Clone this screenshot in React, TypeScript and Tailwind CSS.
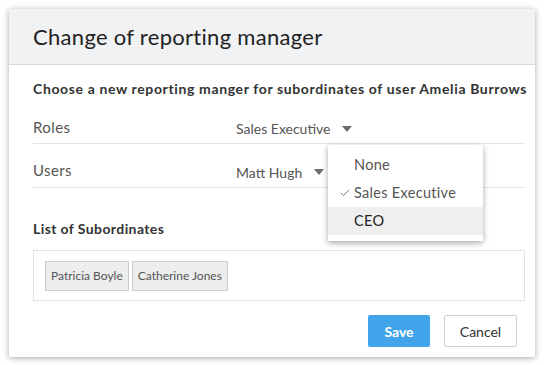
import { Check } from "lucide-react";

const Caret = () => (
  <svg width="10" height="6" viewBox="0 0 10 6" className="shrink-0">
    <path d="M0 0h10L5 6z" fill="#6b6b6b" />
  </svg>
);

const rolesOptions = ["None", "Sales Executive", "CEO"];

export default function App() {
  return (
    <div className="w-[544px] h-[365px] bg-white p-[9px] font-['Lato','Liberation_Sans',sans-serif]">
      <div className="relative w-[526px] h-[348px] bg-white shadow-[0_1px_6px_rgba(0,0,0,0.35)] flex flex-col">
        {/* header */}
        <div className="h-[56px] bg-[#f1f2f4] border-b border-[#d8d8d8] pl-6 flex items-center">
          <h1 className="text-[22px] text-[#222] font-normal tracking-[0.3px]">Change of reporting manager</h1>
        </div>

        {/* body */}
        <div className="pl-6 pr-[10px] pt-[15px] flex flex-col">
          <p className="text-[14px] font-bold text-[#333] leading-[18px] tracking-[0.63px] whitespace-nowrap">
            Choose a new reporting manger for subordinates of user Amelia Burrows
          </p>

          <div className="mt-[8px] pt-[8px] h-[38px] border-b border-[#e4e4e4] flex items-center">
            <span className="w-[203px] text-[15px] text-[#555] tracking-[0.4px] -mt-[3px]">Roles</span>
            <span className="text-[14px] text-[#555]">Sales Executive</span>
            <span className="ml-[12px]"><Caret /></span>
          </div>

          <div className="pt-[13px] h-[44px] border-b border-[#e4e4e4] flex items-center">
            <span className="w-[203px] text-[15px] text-[#555] tracking-[0.4px] -mt-[3px]">Users</span>
            <span className="text-[14px] text-[#555]">Matt Hugh</span>
            <span className="ml-[12px]"><Caret /></span>
          </div>

          <p className="mt-[32px] text-[14px] font-bold text-[#333] leading-[18px] tracking-[0.4px]">
            List of Subordinates
          </p>

          <div className="mt-[12px] h-[51px] border border-[#e2e2e2] px-[11px] flex items-center gap-[3px]">
            {["Patricia Boyle", "Catherine Jones"].map((n) => (
              <span
                key={n}
                className="h-[30px] px-[5px] flex items-center bg-[#ededed] border border-[#cdcdcd] text-[12px] text-[#555]"
              >
                {n}
              </span>
            ))}
          </div>

          <div className="mt-[14px] flex justify-end gap-[14px] pr-[8px]">
            <button className="w-[62px] h-[32px] rounded-[2px] bg-[#42a5ec] text-white text-[14px] font-bold">
              Save
            </button>
            <button className="w-[73px] h-[32px] rounded-[2px] bg-white border border-[#cfcfcf] text-[#333] text-[14px]">
              Cancel
            </button>
          </div>
        </div>

        {/* roles dropdown menu */}
        <div className="absolute left-[319px] top-[136px] w-[155px] bg-white shadow-[0_2px_6px_rgba(0,0,0,0.35)] py-[6px] flex flex-col">
          {rolesOptions.map((o) => (
            <div
              key={o}
              className={`h-[28px] flex items-center text-[14.5px] tracking-[0.3px] ${
                o === "CEO" ? "bg-[#efefef] text-[#222]" : "text-[#555]"
              }`}
            >
              <span className="w-[26px] flex justify-end pr-[3px]">
                {o === "Sales Executive" && <Check size={12} strokeWidth={1.6} color="#666" />}
              </span>
              {o}
            </div>
          ))}
        </div>
      </div>
    </div>
  );
}
